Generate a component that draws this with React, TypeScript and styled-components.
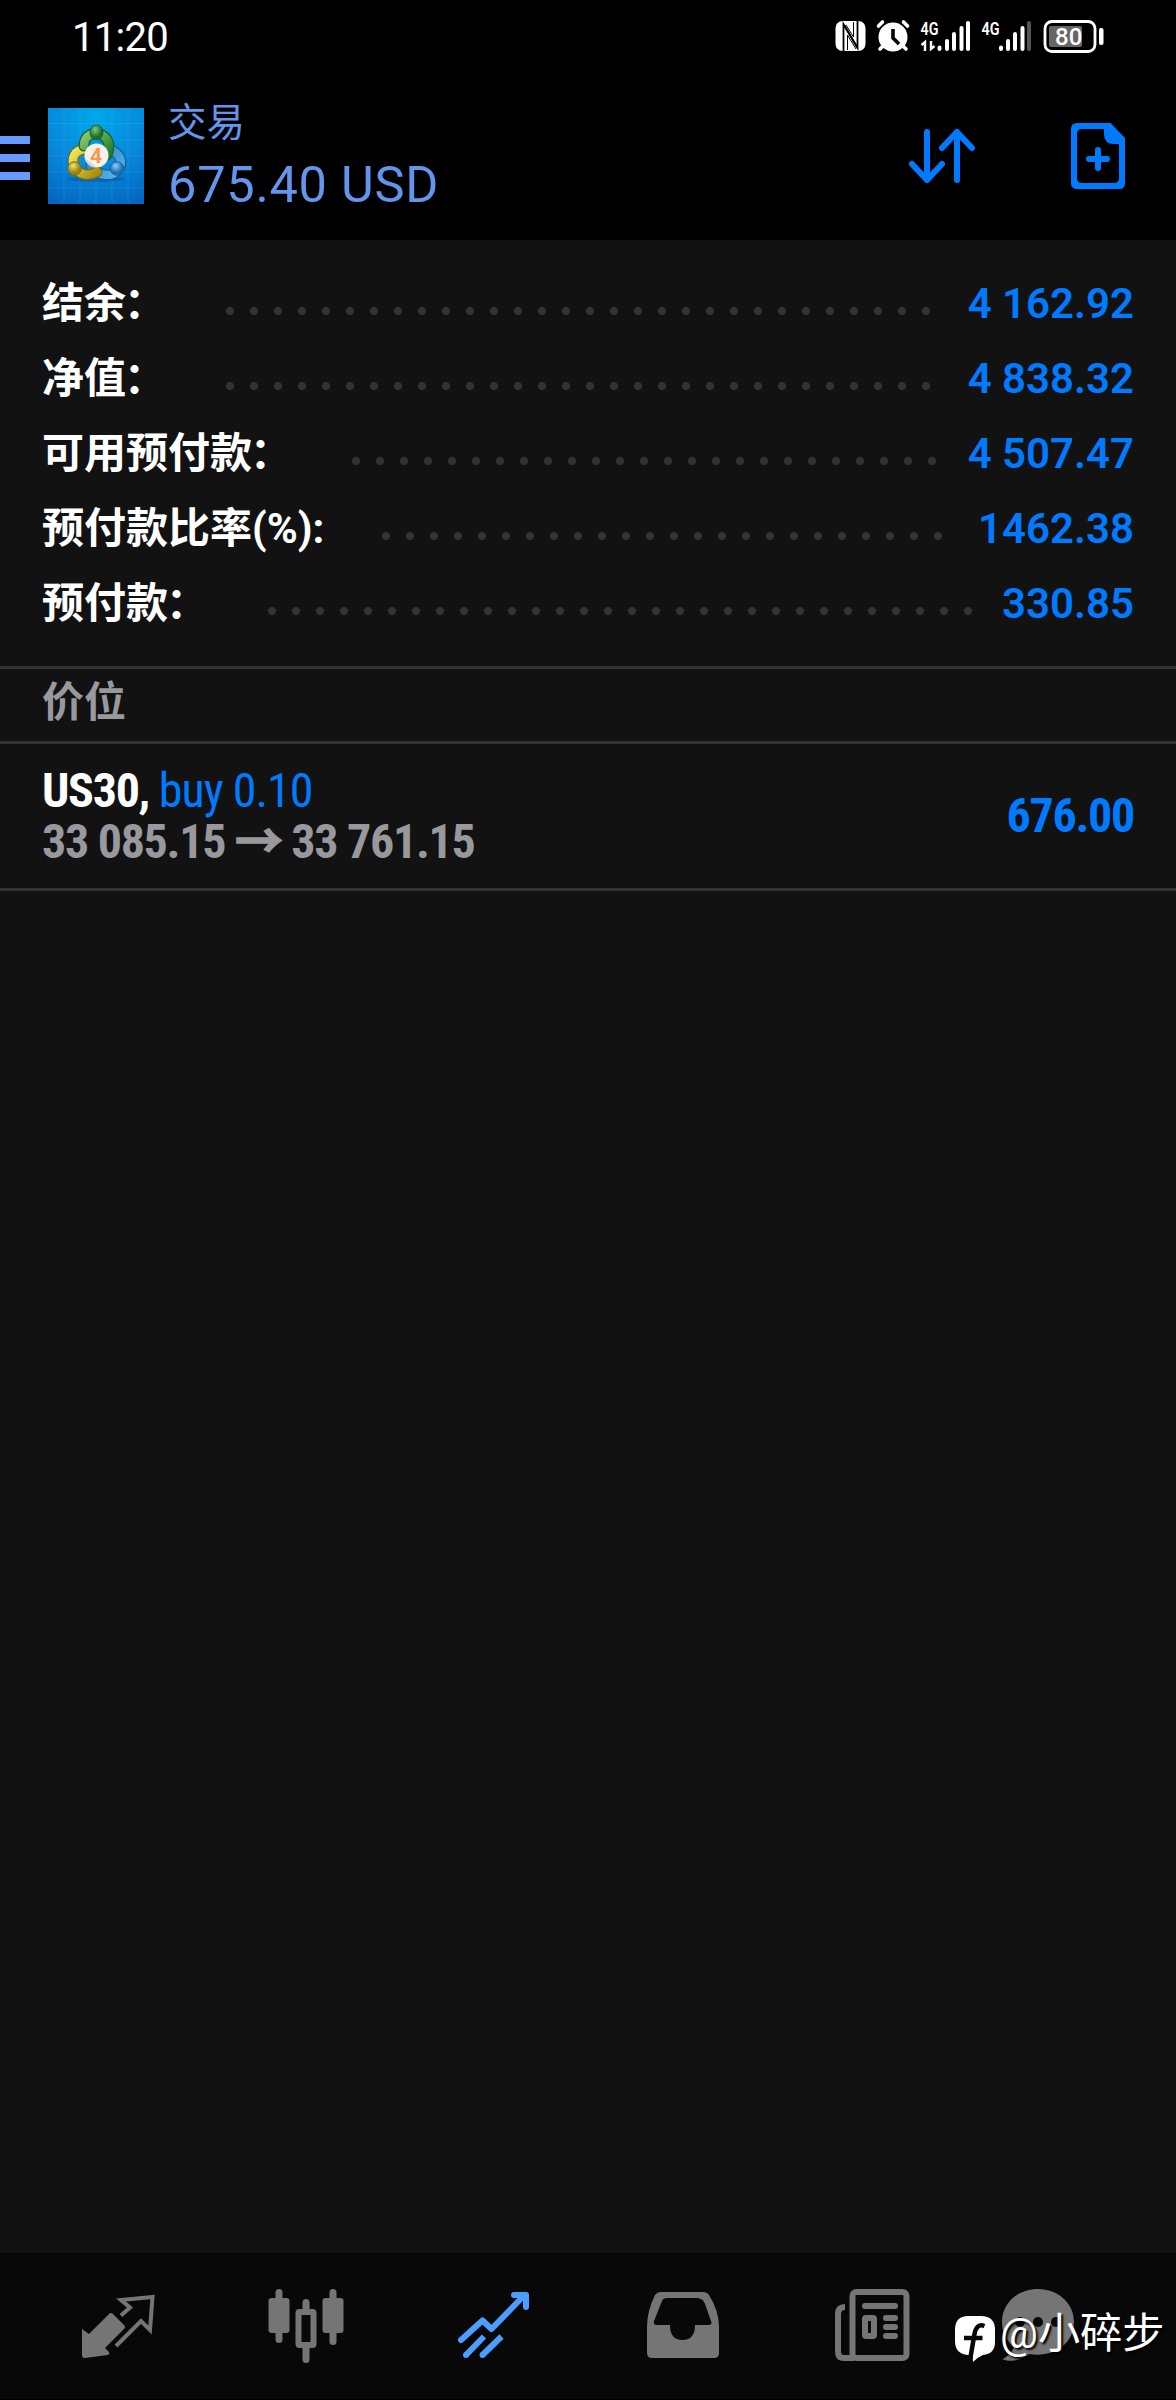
import React from "react";
import styled, { createGlobalStyle } from "styled-components";

const Global = createGlobalStyle`
  * { box-sizing: border-box; }
  body { margin: 0; background: #121212; }
  svg { display: block; flex: none; }
`;
const sans = `Roboto, "Noto Sans CJK SC", sans-serif`;

const Screen = styled.div`
  width: 1176px; height: 2400px; display: flex; flex-direction: column;
  background: #121212; font-family: ${sans}; overflow: hidden; position: relative;
`;
const StatusBar = styled.div`
  height: 72px; background: #000; display: flex; align-items: center;
  justify-content: space-between; padding: 0 72px 0 72px; flex: none;
`;
const Clock = styled.div`
  font-size: 40px; line-height: 72px; color: #fff; padding-top: 3px; letter-spacing: -0.7px;
`;
const Header = styled.header`
  height: 168px; background: #000; display: flex; flex: none; padding-top: 36px;
`;
const MenuButton = styled.div`
  width: 30px; padding-top: 28px; display: flex; flex-direction: column; gap: 10px; margin-right: 18px;
`;
const MenuLine = styled.i` display: block; height: 8px; background: #669aff; `;
const Titles = styled.div`
  margin-left: 24px; color: #6495ed; flex: 1; display: flex; flex-direction: column;
`;
const Title = styled.div` font-size: 38.5px; line-height: 40px; margin-top: -5px; `;
const Total = styled.div`
  font-size: 50.5px; line-height: 60px; margin-top: 12px; letter-spacing: 0.75px; white-space: nowrap;
`;
const Actions = styled.div`
  display: flex; gap: 92px; margin-right: 48px; padding-top: 12px;
  svg:first-child { margin-top: 6px; }
`;
const Summary = styled.section` height: 426px; padding: 26px 42px 0; flex: none; `;
const SummaryRow = styled.div`
  height: 75px; display: flex; font-size: 42px; line-height: 76px; white-space: nowrap;
`;
const Label = styled.span` color: #fff; font-weight: 700; `;
const Colon = styled.span` margin: 0 2px 0 -2px; `;
const Leader = styled.span` flex: 1; margin: 41px 12px 0 50px; `;
const Dots = styled.i`
  display: block; height: 8px; width: round(down, 100%, 24px);
  background: radial-gradient(circle at 12px 4px, #333 3.6px, transparent 4.4px) 0 0 / 24px 8px repeat-x;
`;
const Value = styled.span` color: #007aff; font-weight: 650; `;
const SectionTitle = styled.h2`
  margin: 0; height: 78px; border: solid #333; border-width: 3px 0; padding-left: 42px; flex: none;
  color: #98989d; font-size: 42px; line-height: 68px; font-weight: 700;
`;
const Position = styled.article`
  height: 147px; border-bottom: 3px solid #333; padding: 21px 42px 0; display: flex;
  justify-content: space-between; flex: none; font-size: 48px; font-weight: 700; line-height: 51px; white-space: nowrap;
`;
const Condensed = styled.div`
  font-stretch: 75%; letter-spacing: -1.3px;
`;
const Symbol = styled.span` color: #fff; `;
const Side = styled.span` color: #007aff; font-weight: 400; letter-spacing: -1px; `;
const Prices = styled.div` color: #98989d; `;
const Arrow = styled.span` -webkit-text-stroke: 1.5px #98989d; `;
const Profit = styled(Condensed)` color: #007aff; padding-top: 25px; `;
const Spacer = styled.div` flex: 1; `;
const TabBar = styled.nav`
  height: 147px; background: #080808; border-bottom: 1px solid #000; display: flex; padding-left: 24px; flex: none;
`;
const Tab = styled.div<{ $active?: boolean; $last?: boolean }>`
  width: ${p => (p.$last ? 148 : 188)}px; display: flex; justify-content: center; padding-top: 27px;
  color: ${p => (p.$active ? "#4a9eff" : "#757575")};
`;
const Watermark = styled.div`
  position: absolute; left: 950px; top: 2305px; display: flex; align-items: center; color: #fff;
  font-size: 42.2px; line-height: 54px; text-shadow: 2px 2px 2px #000; white-space: nowrap;
  svg { margin-top: 2px; }
`;

const StatusIcons = () => (
  <svg width="270" height="36" viewBox="834 18 270 36" fill="#fff">
    <rect x="835.5" y="21" width="30" height="30" rx="7" />
    <path d="M843.500 52V24L857 47" fill="none" stroke="#000" strokeWidth="1.8" />
    <path d="M857.500 20V48L844 25" fill="none" stroke="#000" strokeWidth="1.8" />
    <path d="M847.500 50V35L856 49M853.500 22V37L846 25" fill="none" stroke="#000" strokeWidth="1" />
    <circle cx="893" cy="37" r="14.500" />
    <path d="M878.500 26l4-4M907.500 26l-4-4M883 46l-3 3M903 46l3 3" stroke="#fff" strokeWidth="3.600" strokeLinecap="round" />
    <path d="M893 29v9l6 6" fill="none" stroke="#000" strokeWidth="3.600" />
    <text x="920.500" y="34.500" fontSize="18.500" fontWeight="600" fontFamily="Roboto" textLength="18" lengthAdjust="spacingAndGlyphs">4G</text>
    <text x="981.500" y="34.500" fontSize="18.500" fontWeight="600" fontFamily="Roboto" textLength="18" lengthAdjust="spacingAndGlyphs">4G</text>
    <path d="M921.500 45l3.500-3v9M931 41v8l3.500-3" fill="none" stroke="#fff" strokeWidth="2.400" />
    <path d="M939.500 47.500v1.500M947 41v8M954 34v15M961.500 28v21M968 23v26M1001 47.500v1.500M1008 41v8M1015 34v15M1022.500 28v21" stroke="#fff" strokeWidth="4" strokeLinecap="round" />
    <path d="M1029 23v26" stroke="#555" strokeWidth="4" strokeLinecap="round" />
    <rect x="1045" y="21.500" width="50" height="30" rx="7" fill="none" stroke="#fff" strokeWidth="2.800" />
    <rect x="1049" y="26" width="33" height="21" rx="2" fill="#666" />
    <text x="1055" y="45" fontSize="24" fontWeight="500" fontFamily="Roboto">80</text>
    <rect x="1099" y="28" width="4.500" height="17" rx="2" />
  </svg>
);

const Logo = () => (
  <svg width="96" height="96" viewBox="0 0 96 96">
    <defs>
      <radialGradient id="sky" cx=".5" cy=".1" r="1"><stop offset="0" stopColor="#00a8ea" /><stop offset=".5" stopColor="#0789dc" /><stop offset="1" stopColor="#0365c0" /></radialGradient>
      <linearGradient id="green" x2="1" y2="1"><stop stopColor="#8ccb70" /><stop offset="1" stopColor="#1d7a2c" /></linearGradient>
      <linearGradient id="gold" x2="1" y2="1"><stop stopColor="#f2ea60" /><stop offset="1" stopColor="#a88c10" /></linearGradient>
      <linearGradient id="blue" x2="1" y2="1"><stop stopColor="#2a80c0" /><stop offset="1" stopColor="#56b4ec" /></linearGradient>
      <radialGradient id="gb" cx=".4" cy=".3"><stop stopColor="#80c884" /><stop offset="1" stopColor="#1c722c" /></radialGradient>
      <radialGradient id="yb" cx=".4" cy=".3"><stop stopColor="#f0e478" /><stop offset="1" stopColor="#a08410" /></radialGradient>
      <radialGradient id="bb" cx=".4" cy=".3"><stop stopColor="#90d0f4" /><stop offset="1" stopColor="#1c70b4" /></radialGradient>
    </defs>
    <rect width="96" height="96" fill="url(#sky)" />
    <path d="M0 15.500h96M0 32h96M0 48h96M0 64h96M0 80h96M16 0v96M32 0v96M48 0v96M64 0v96M80 0v96" stroke="#53bdf2" strokeOpacity=".2" />
    <ellipse cx="48" cy="71" rx="29" ry="3" fill="#03549f" opacity=".5" />
    <g fill="none" strokeLinecap="round">
      <path d="M61 41C72 45 76 54 70 62C64 69 51 69 43 58" stroke="#1a5e98" strokeWidth="11" />
      <path d="M61 41C72 45 76 54 70 62C64 69 51 69 43 58" stroke="url(#blue)" strokeWidth="8.500" />
      <path d="M37 41C27 42 22 50 27 59C31 67 40 69 49 64" stroke="#736c12" strokeWidth="11" />
      <path d="M37 41C27 42 22 50 27 59C31 67 40 69 49 64" stroke="url(#gold)" strokeWidth="8.500" />
      <path d="M36 38C36 27 46 23 54 27C62 32 62 38 59 47" stroke="#17652a" strokeWidth="11" />
      <path d="M36 38C36 27 46 23 54 27C62 32 62 38 59 47" stroke="url(#green)" strokeWidth="8.500" />
    </g>
    <ellipse cx="48.500" cy="24.500" rx="6.500" ry="7.500" fill="url(#gb)" stroke="#176228" />
    <circle cx="26.500" cy="60.500" r="6.700" fill="url(#yb)" stroke="#7a6c10" />
    <circle cx="69" cy="60.500" r="6.700" fill="url(#bb)" stroke="#1a609c" />
    <circle cx="48.500" cy="47.500" r="12" fill="#f3f0ee" />
    <path d="M36.500 50q8 6 12 9.500A12 12 0 0 1 36.500 50" fill="#d4d2d2" />
    <text x="42" y="55" fontSize="21" fontWeight="700" fontFamily="Roboto" fill="#f89a4a">4</text>
  </svg>
);

const SortIcon = () => (
  <svg width="70" height="60" viewBox="906 126 70 60" fill="none" stroke="#007aff" strokeWidth="6" strokeLinecap="round" strokeLinejoin="round">
    <path d="M927 132v48M912 164l15 16 15-16M957 180v-48M942 148l15-16 15 16" />
  </svg>
);
const NewOrderIcon = () => (
  <svg width="60" height="70" viewBox="1068 120 60 70">
    <path fillRule="evenodd" fill="#007aff" d="M1077 123h33.500l14.500 15v45q0 6-6 6h-42q-6 0-6-6v-54q0-6 6-6zM1082 129q-5 0-5 5v44q0 5 5 5h32q5 0 5-5v-34h-5q-10 0-10-10v-5z" />
    <path d="M1089 159h18M1098 150v18" stroke="#007aff" strokeWidth="6" strokeLinecap="round" />
  </svg>
);
const QuotesIcon = () => (
  <svg width="80" height="86" viewBox="78 2280 80 86" fill="currentColor">
    <path d="M82 2329l7 5 20-20q2-2 4 0l11 11q2 2 0 4l-19 19 4 4q1 2-1 3l-23 3q-3 0-3-3z" />
    <path d="M121 2315.500l9-8-9-7.500 31.500-3-2.500 33-9-9-25 25" fill="none" stroke="currentColor" strokeWidth="4" />
  </svg>
);
const ChartIcon = () => (
  <svg width="80" height="86" viewBox="265.500 2280 80 86" fill="currentColor">
    <rect x="268" y="2298" width="21" height="35" rx="3" />
    <rect x="322" y="2298" width="21" height="35" rx="3" />
    <rect x="298" y="2312" width="15" height="33" rx="1" fill="none" stroke="currentColor" strokeWidth="6" />
    <path d="M278.500 2292.500v47M332.500 2292.500v49M305.500 2302.500v9M305.500 2347v12.500" stroke="currentColor" strokeWidth="7" strokeLinecap="round" />
  </svg>
);
const TradeIcon = () => (
  <svg width="80" height="86" viewBox="454 2280 80 86" fill="none" stroke="currentColor" strokeWidth="6">
    <path d="M461 2340l21.500-19.500 9 8.500 33-34" strokeLinejoin="round" strokeLinecap="round" />
    <path d="M514 2295h12v12" strokeLinecap="round" strokeLinejoin="round" />
    <path d="M466 2355l18-18.500M482.500 2355l19-18.500" />
    <g fill="currentColor" stroke="none"><circle cx="466" cy="2355" r="3" /><circle cx="482.500" cy="2355" r="3" /></g>
  </svg>
);
const InboxIcon = () => (
  <svg width="80" height="86" viewBox="642 2280 80 86" fill="currentColor">
    <path fillRule="evenodd" d="M661 2292h42q4 0 6 3 10 16 10 32v26q0 5-5 5h-62q-5 0-5-5v-26q0-16 8-32 2-3 6-3zM667 2298q-4 0-5 3l-8 20q-1 4 3 4h13q0 15 12.500 15t12.500-15h13q5 0 3-4l-6-17q-2-6-8-6z" />
  </svg>
);
const NewsIcon = () => (
  <svg width="80" height="86" viewBox="830 2280 80 86" fill="none" stroke="currentColor" strokeWidth="6">
    <rect x="852.500" y="2292" width="54" height="66" rx="4" />
    <path d="M845 2307q-7 0-7 7v38q0 6 6 6h10" />
    <path d="M865 2306h30M886 2318h9M886 2327h9M886 2336h9" strokeLinecap="round" />
    <rect x="865" y="2318" width="9" height="18" rx="1" />
  </svg>
);
const ChatIcon = () => (
  <svg width="80" height="86" viewBox="998 2280 80 86" fill="currentColor">
    <path d="M1038 2289c-20 0-36 14-36 33 0 11 5 19 12 25-2 6-8 11-12 12 10 4 19 1 27-5 26 4 45-11 45-32 0-19-16-33-36-33z" />
    <g fill="#080808"><circle cx="1020" cy="2322" r="5" /><circle cx="1038" cy="2322" r="5" /><circle cx="1056" cy="2322" r="5" /></g>
  </svg>
);
const ForumMark = () => (
  <svg width="50" height="56" viewBox="950 2306 50 56">
    <path d="M968 2315h13q14 0 14 14v12q0 12-12 13-5 2-10 7-1-4 0-7h-5q-13-1-13-14v-11q0-14 13-14z" fill="#fff" />
    <path d="M984.500 2325q-8-3-10 8l-4.500 26M964 2337h18.500" fill="none" stroke="#080808" strokeWidth="4.500" />
  </svg>
);

const rows: [string, string, string][] = [
  ["结余", "：", "4 162.92"],
  ["净值", "：", "4 838.32"],
  ["可用预付款", "：", "4 507.47"],
  ["预付款比率(%):", "", "1462.38"],
  ["预付款", "：", "330.85"],
];

export default function App() {
  return (
    <Screen>
      <Global />
      <StatusBar><Clock>11:20</Clock><StatusIcons /></StatusBar>
      <Header>
        <MenuButton><MenuLine /><MenuLine /><MenuLine /></MenuButton>
        <Logo />
        <Titles><Title>交易</Title><Total>675.40 USD</Total></Titles>
        <Actions><SortIcon /><NewOrderIcon /></Actions>
      </Header>
      <Summary>
        {rows.map(([label, colon, value]) => (
          <SummaryRow key={label}>
            <Label>{label}{colon && <Colon>{colon}</Colon>}</Label>
            <Leader><Dots /></Leader>
            <Value>{value}</Value>
          </SummaryRow>
        ))}
      </Summary>
      <SectionTitle>价位</SectionTitle>
      <Position>
        <Condensed>
          <div><Symbol>US30,</Symbol> <Side>buy 0.10</Side></div>
          <Prices>33 085.15 <Arrow>→</Arrow> 33 761.15</Prices>
        </Condensed>
        <Profit>676.00</Profit>
      </Position>
      <Spacer />
      <TabBar>
        <Tab><QuotesIcon /></Tab>
        <Tab><ChartIcon /></Tab>
        <Tab $active><TradeIcon /></Tab>
        <Tab><InboxIcon /></Tab>
        <Tab><NewsIcon /></Tab>
        <Tab $last><ChatIcon /></Tab>
      </TabBar>
      <Watermark><ForumMark />@小碎步</Watermark>
    </Screen>
  );
}
